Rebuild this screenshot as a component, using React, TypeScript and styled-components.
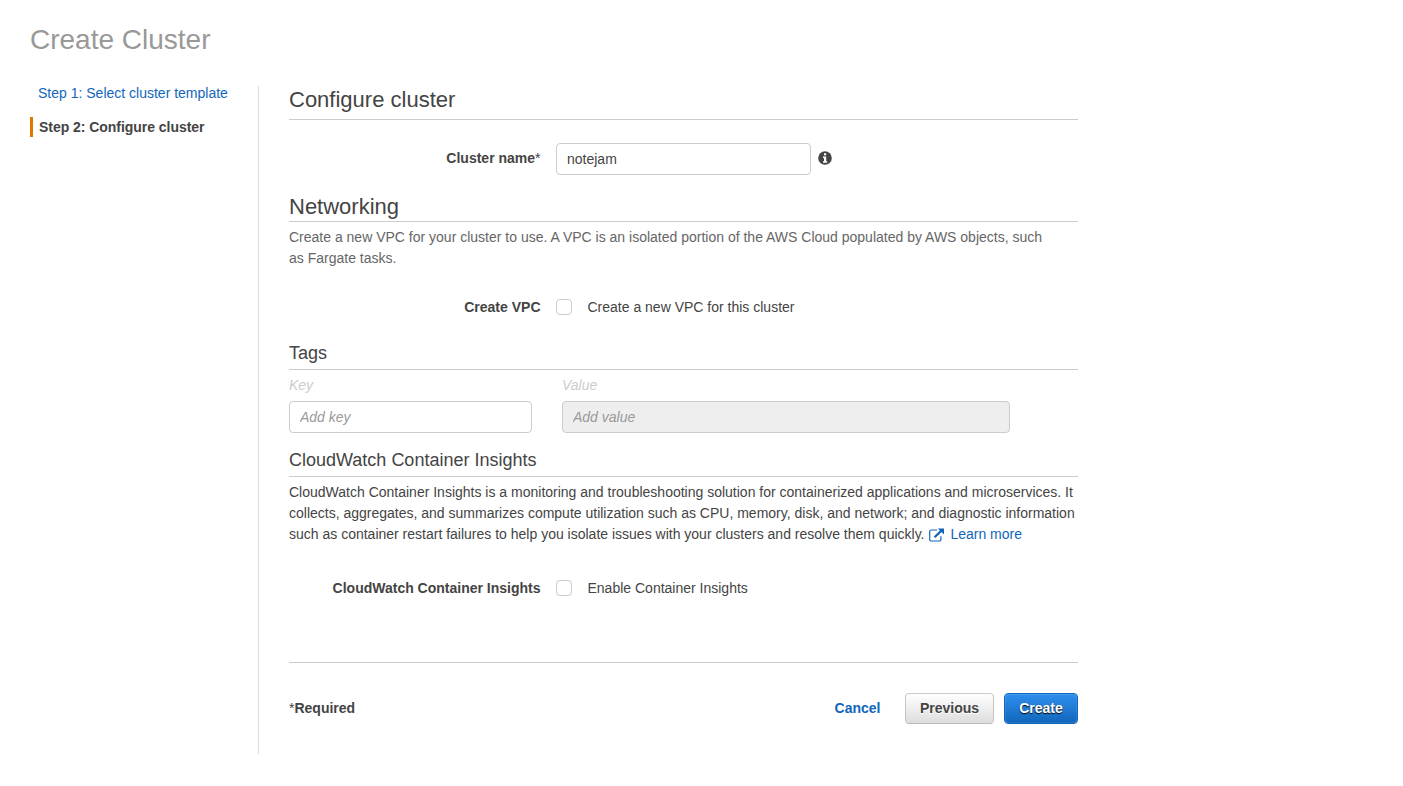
import React from "react";
import styled, { createGlobalStyle } from "styled-components";

const GlobalStyle = createGlobalStyle`
  *, *::before, *::after { box-sizing: border-box; }
  body {
    margin: 0;
    background: #fff;
    color: #444;
    font: 14px/21px "Liberation Sans", Arial, sans-serif;
  }
`;

const Page = styled.div`
  padding: 23px 30px 0;
  height: 786px;
  overflow: hidden;
`;

const PageTitle = styled.h1`
  margin: 0 0 29px;
  font-size: 28px;
  line-height: 34px;
  font-weight: 400;
  color: #999;
`;

const Columns = styled.div`
  display: flex;
`;

const Steps = styled.nav`
  width: 228px;
  flex: none;
  display: flex;
  flex-direction: column;
  align-items: flex-start;
  gap: 14px;
`;

const Step = styled.a<{ $current?: boolean }>`
  line-height: 20px;
  margin-top: ${(p) => (p.$current ? 0 : "-3px")};
  padding-left: ${(p) => (p.$current ? "6px" : "8px")};
  border-left: ${(p) => (p.$current ? "3px solid #e07700" : "0")};
  color: ${(p) => (p.$current ? "#444" : "#1166bb")};
  font-weight: ${(p) => (p.$current ? 700 : 400)};
  letter-spacing: ${(p) => (p.$current ? "-0.04px" : "normal")};
  text-decoration: none;
  white-space: nowrap;
`;

const Main = styled.main`
  width: 820px;
  height: 668px;
  flex: none;
  padding-left: 30px;
  border-left: 1px solid #ddd;
`;

const Heading = styled.h2<{ $small?: boolean; $gap?: number }>`
  margin: 0;
  padding-bottom: ${(p) => p.$gap ?? 6}px;
  border-bottom: 1px solid #ccc;
  font-size: ${(p) => (p.$small ? 18 : 22)}px;
  line-height: 27px;
  font-weight: 400;
`;

const Field = styled.div<{ $before: number; $after: number }>`
  display: flex;
  align-items: center;
  height: 32px;
  margin: ${(p) => p.$before}px 0 ${(p) => p.$after}px;
`;

const Label = styled.label<{ $raised?: boolean }>`
  width: 251.5px;
  margin-right: 15.5px;
  padding-bottom: ${(p) => (p.$raised ? 2 : 0)}px;
  flex: none;
  text-align: right;
  font-weight: 700;
`;

const Asterisk = styled.span`
  font-weight: 400;
`;

const TextInput = styled.input<{ $width: number }>`
  width: ${(p) => p.$width}px;
  height: 32px;
  padding: 0 10px;
  border: 1px solid #ccc;
  border-radius: 4px;
  background: #fff;
  color: #444;
  font: inherit;
  outline: none;
  &::placeholder {
    color: #999;
    font-style: italic;
    opacity: 1;
  }
  &:disabled {
    background: #eee;
  }
`;

const InfoIcon = styled.svg`
  width: 14px;
  height: 14px;
  margin: -2px 0 0 7px;
`;

const Checkbox = styled.input.attrs({ type: "checkbox" })`
  appearance: none;
  width: 16px;
  height: 16px;
  margin: 0 15.5px 0 0;
  border: 1px solid #ccc;
  border-radius: 4px;
  background: #fff;
`;

const Intro = styled.p`
  width: 765px;
  margin: 5px 0 0;
  color: #666;
`;

const Description = styled.p`
  margin: 5px 0 0;
`;

const Link = styled.a`
  display: inline-block;
  color: #1166bb;
  text-decoration: none;
`;

const ExternalIcon = styled.svg`
  width: 16px;
  height: 14px;
  margin: 0 5px 0 1px;
  vertical-align: -3px;
`;

const TagRow = styled.div`
  display: flex;
  gap: 30px;
  margin: 5px 0 14px;
`;

const TagColumn = styled.div`
  display: flex;
  flex-direction: column;
  gap: 5px;
`;

const ColumnName = styled.span`
  line-height: 21px;
  color: #ccc;
  font-style: italic;
`;

const Footer = styled.footer`
  display: flex;
  align-items: center;
  justify-content: space-between;
  padding-top: 30px;
  border-top: 1px solid #ccc;
  font-weight: 700;
`;

const Actions = styled.div`
  display: flex;
  align-items: center;
`;

const Cancel = styled(Link)`
  margin-right: 24.5px;
`;

const Button = styled.button<{ $primary?: boolean }>`
  width: ${(p) => (p.$primary ? 74 : 89)}px;
  height: 31px;
  margin-left: ${(p) => (p.$primary ? "10px" : 0)};
  padding: 0 0 1px;
  border: 1px solid;
  border-color: ${(p) => (p.$primary ? "#1166bb" : "#ccc #c4c4c4 #bbb")};
  border-radius: 4px;
  background: ${(p) =>
    p.$primary
      ? "linear-gradient(#2f8fee, #1166bb) padding-box"
      : "linear-gradient(#fff, #ddd) padding-box"};
  box-shadow: ${(p) =>
    p.$primary ? "inset 0 0 0 1px rgba(255,255,255,.08)" : "none"};
  color: ${(p) => (p.$primary ? "#fff" : "#444")};
  text-shadow: ${(p) => (p.$primary ? "0 1px 1px #000" : "0 1px 0 #fff")};
  font: inherit;
  font-weight: 700;
`;

export default function App() {
  return (
    <Page>
      <GlobalStyle />
      <PageTitle>Create Cluster</PageTitle>
      <Columns>
        <Steps>
          <Step>Step 1: Select cluster template</Step>
          <Step $current>Step 2: Configure cluster</Step>
        </Steps>
        <Main>
          <Heading>Configure cluster</Heading>
          <Field $before={23} $after={18}>
            <Label $raised>
              Cluster name<Asterisk>*</Asterisk>
            </Label>
            <TextInput $width={255} defaultValue="notejam" />
            <InfoIcon viewBox="0 0 14 14">
              <circle cx="7" cy="7" r="6.8" fill="#444" />
              <path
                d="M6 2.2h2.2v2H6zM5 5.4h3.2v4.8h1v1.6H5v-1.6h1V7H5z"
                fill="#fff"
              />
            </InfoIcon>
          </Field>

          <Heading $gap={1}>Networking</Heading>
          <Intro>
            Create a new VPC for your cluster to use. A VPC is an isolated
            portion of the AWS Cloud populated by AWS objects, such as Fargate
            tasks.
          </Intro>
          <Field $before={22} $after={17}>
            <Label>Create VPC</Label>
            <Checkbox />
            Create a new VPC for this cluster
          </Field>

          <Heading $small $gap={2}>Tags</Heading>
          <TagRow>
            <TagColumn>
              <ColumnName>Key</ColumnName>
              <TextInput $width={243} placeholder="Add key" />
            </TagColumn>
            <TagColumn>
              <ColumnName>Value</ColumnName>
              <TextInput $width={448} placeholder="Add value" disabled />
            </TagColumn>
          </TagRow>

          <Heading $small $gap={2}>CloudWatch Container Insights</Heading>
          <Description>
            CloudWatch Container Insights is a monitoring and troubleshooting
            solution for containerized applications and microservices. It
            collects, aggregates, and summarizes compute utilization such as
            CPU, memory, disk, and network; and diagnostic information such as
            container restart failures to help you isolate issues with your
            clusters and resolve them quickly.{" "}
            <Link>
              <ExternalIcon viewBox="0 0 16 14" fill="none">
                <path
                  d="M8 2H2.3Q.7 2 .7 3.6v7.8q0 1.6 1.6 1.6h8q1.6 0 1.6-1.6V8.2"
                  stroke="#1166bb"
                  strokeWidth="1.2"
                />
                <path d="M5.6 9.2l6.8-6.6" stroke="#1166bb" strokeWidth="2.2" />
                <path d="M8.8.4H15V6.6z" fill="#1166bb" />
              </ExternalIcon>
              Learn more
            </Link>
          </Description>
          <Field $before={27} $after={58}>
            <Label>CloudWatch Container Insights</Label>
            <Checkbox />
            Enable Container Insights
          </Field>

          <Footer>
            <span>
              <Asterisk>*</Asterisk>Required
            </span>
            <Actions>
              <Cancel>Cancel</Cancel>
              <Button>Previous</Button>
              <Button $primary>Create</Button>
            </Actions>
          </Footer>
        </Main>
      </Columns>
    </Page>
  );
}
